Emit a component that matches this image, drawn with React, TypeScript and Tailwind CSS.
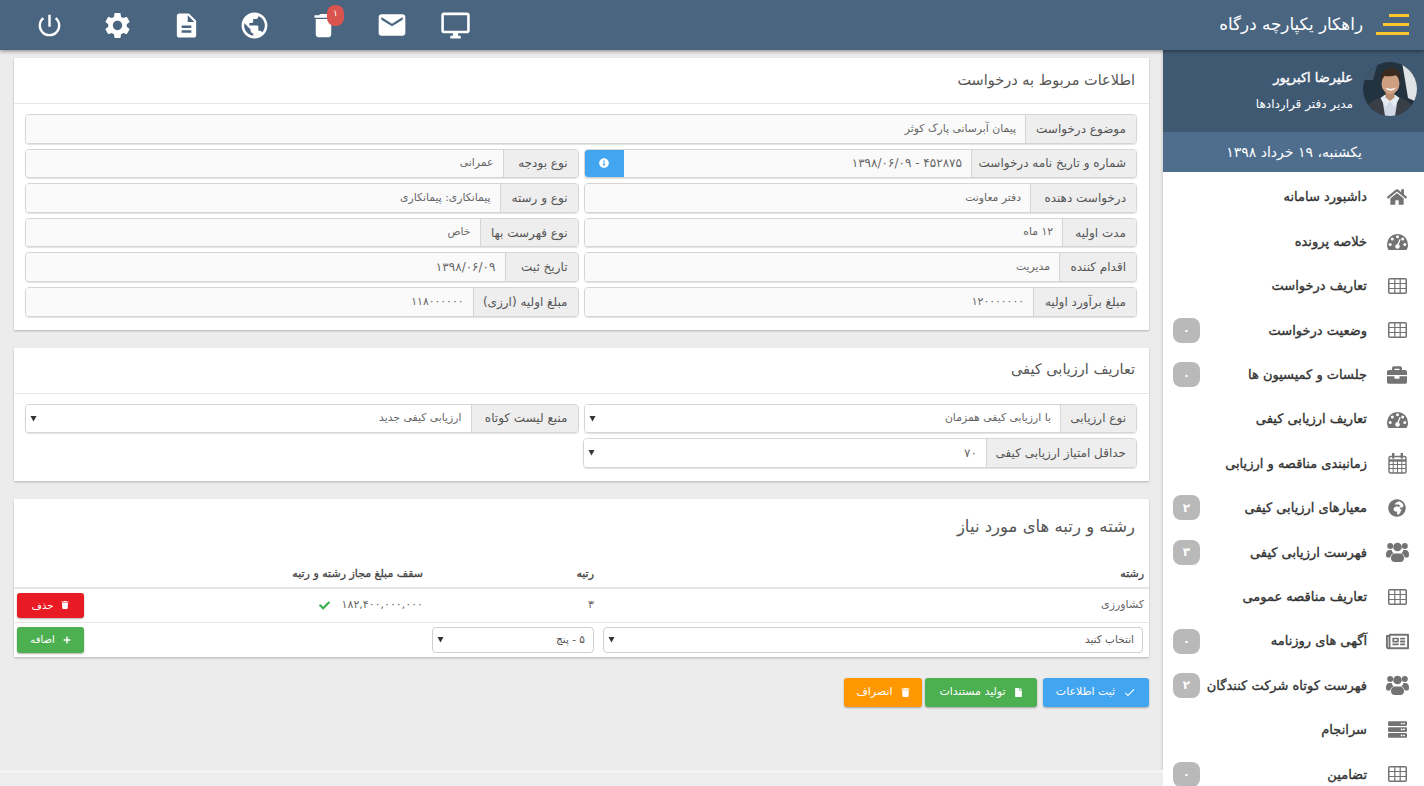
import type { ReactNode } from "react";
import {
  FaBriefcase,
  FaCheck,
  FaFile,
  FaGlobeAfrica,
  FaHome,
  FaInfoCircle,
  FaPlus,
  FaRegNewspaper,
  FaServer,
  FaTrash,
} from "react-icons/fa";
import {
  MdCheck,
  MdDelete,
  MdDescription,
  MdEmail,
  MdOutlineDesktopWindows,
  MdPowerSettingsNew,
  MdPublic,
  MdSettings,
} from "react-icons/md";

function CalendarIcon() {
  return (
    <svg width="19" height="21" viewBox="0 0 19 21" fill="none" stroke="currentColor">
      <rect x="1" y="3.5" width="17" height="16.5" rx="1.5" strokeWidth="1.4" />
      <path d="M1 7.5h17" strokeWidth="2.4" />
      <path d="M1 11.5h17M1 15.5h17M5.2 8v12M9.5 8v12M13.8 8v12" strokeWidth="1" />
      <path d="M5.2 0.5v4M13.8 0.5v4" strokeWidth="2.4" strokeLinecap="round" />
    </svg>
  );
}

function TableIcon() {
  return (
    <svg width="19" height="16" viewBox="0 0 19 16" fill="none" stroke="currentColor">
      <rect x="0.75" y="0.75" width="17.5" height="14.5" rx="1" strokeWidth="1.5" />
      <path d="M1 5.5h17M1 10.5h17M6.8 1v14M12.2 1v14" strokeWidth="1.2" />
    </svg>
  );
}

function GaugeIcon() {
  return (
    <svg width="21" height="17" viewBox="0 0 21 17" fill="currentColor">
      <path d="M0 11.5a10.5 10.5 0 0 1 21 0c0 2-.5 4-1.5 5.5h-18C.5 15.500 0 13.500 0 11.500z" />
      <g fill="#fff">
        <circle cx="3.200" cy="11.500" r="1.500" />
        <circle cx="5.300" cy="6" r="1.500" />
        <circle cx="10.500" cy="3.800" r="1.500" />
        <circle cx="15.700" cy="6" r="1.500" />
        <circle cx="17.800" cy="11.500" r="1.500" />
        <circle cx="10.500" cy="13.500" r="2.300" />
        <path d="M9.600 13l3-7 1 .4-2.500 7.200z" />
      </g>
    </svg>
  );
}

function UsersIcon() {
  return (
    <svg width="23" height="20" viewBox="0 0 23 20" fill="currentColor">
      <circle cx="4.200" cy="4" r="3" />
      <circle cx="18.800" cy="4" r="3" />
      <circle cx="11.500" cy="5" r="4.300" />
      <path d="M0 12.500c0-3 1.500-4.500 3.500-4.500h2.200c.3 1.500 1 2.500 1.800 3.200-1.800.8-3 2.300-3.300 4.300H1.500C.5 15.500 0 14.500 0 12.500z" />
      <path d="M23 12.500c0-3-1.500-4.500-3.500-4.500h-2.200c-.3 1.500-1 2.500-1.800 3.200 1.800.8 3 2.300 3.300 4.300h2.700c1 0 1.500-1 1.500-3z" />
      <path d="M5 16c0-3 2-4.500 3.500-4.500h6C16 11.500 18 13 18 16c0 2.500-1.500 4-3.500 4h-6C6.500 20 5 18.500 5 16z" />
    </svg>
  );
}

const navItems: { label: string; icon: ReactNode; badge?: string }[] = [
  { label: "داشبورد سامانه", icon: <FaHome size={20} /> },
  { label: "خلاصه پرونده", icon: <GaugeIcon /> },
  { label: "تعاریف درخواست", icon: <TableIcon /> },
  { label: "وضعیت درخواست", icon: <TableIcon />, badge: "۰" },
  { label: "جلسات و کمیسیون ها", icon: <FaBriefcase size={20} />, badge: "۰" },
  { label: "تعاریف ارزیابی کیفی", icon: <GaugeIcon /> },
  { label: "زمانبندی مناقصه و ارزیابی", icon: <CalendarIcon /> },
  { label: "معیارهای ارزیابی کیفی", icon: <FaGlobeAfrica size={18} />, badge: "۲" },
  { label: "فهرست ارزیابی کیفی", icon: <UsersIcon />, badge: "۳" },
  { label: "تعاریف مناقصه عمومی", icon: <TableIcon /> },
  { label: "آگهی های روزنامه", icon: <FaRegNewspaper size={23} />, badge: "۰" },
  { label: "فهرست کوتاه شرکت کنندگان", icon: <UsersIcon />, badge: "۲" },
  { label: "سرانجام", icon: <FaServer size={19} /> },
  { label: "تضامین", icon: <TableIcon />, badge: "۰" },
];

function Logo() {
  return (
    <svg width="34" height="22" viewBox="0 0 34 22" fill="#fcc72c">
      <rect x="14" y="0" width="20" height="3" />
      <rect x="8" y="9" width="26" height="3" />
      <rect x="1" y="18" width="33" height="3" />
    </svg>
  );
}

function Avatar() {
  return (
    <svg width="54" height="54" viewBox="0 0 54 54" className="shrink-0 rounded-full">
      <rect width="54" height="54" fill="#22323f" />
      <path d="M39 0h15v40l-9-4z" fill="#dfe3e6" />
      <path d="M0 0h15L10 18H0z" fill="#41586c" />
      <path d="M1 54c0-9 6-15 16-18h20c10 3 15 9 16 18z" fill="#3a3f47" />
      <path d="M19 35h16l-3 19H22z" fill="#cfd8e4" />
      <path d="M17.500 36l5 9 4.500-6 4.500 6 5-9-4-3h-11z" fill="#e6ebf2" />
      <path d="M22.500 28h9v7.500l-4.500 3.500-4.500-3.500z" fill="#b98d70" />
      <ellipse cx="27.500" cy="21.500" rx="9" ry="10.500" fill="#cf9f82" />
      <path d="M18 20c-1.500-9 4-14 10.500-14S39 11 37 20c-.5-3-1.500-5.500-3-7-5 1.500-9 1.500-12.500 1-1.500 1.500-3 3.500-3.500 6z" fill="#3b2a1e" />
      <path d="M22.500 25.500c3 1.800 7 1.800 10 0-1 4-9 4-10 0z" fill="#fff" />
    </svg>
  );
}

function Sidebar() {
  return (
    <aside className="h-full w-[261px] shrink-0 overflow-hidden bg-white shadow-[0_0_4px_rgba(0,0,0,0.2)]">
      <div className="flex h-[82px] items-start gap-[10px] bg-[#3f5973] pt-[12px] pr-[7px] text-white">
        <Avatar />
        <div className="pt-[6px]">
          <div className="text-[13px] leading-5 [-webkit-text-stroke:0.35px_#fff]">علیرضا اکبرپور</div>
          <div className="mt-[6px] text-[12px] leading-5">مدیر دفتر قراردادها</div>
        </div>
      </div>
      <div className="flex h-[40px] items-center bg-[#4f6e8d] pr-[62px] text-[14px] text-white">
        یکشنبه، ۱۹ خرداد ۱۳۹۸
      </div>
      <nav className="pt-[3px]">
        {navItems.map((item) => (
          <div key={item.label} className="flex h-[44.4px] items-center">
            <div className="flex w-[54px] shrink-0 justify-center text-[#737373]">{item.icon}</div>
            <div className="mr-[3px] whitespace-nowrap text-[13px] text-[#333] [-webkit-text-stroke:0.35px_#333]">{item.label}</div>
            {item.badge && (
              <div className="mr-auto ml-[10px] flex h-[25px] w-[27px] items-center justify-center rounded-[8px] bg-[#b9b9b9] text-[12px] font-bold text-white">
                {item.badge}
              </div>
            )}
          </div>
        ))}
      </nav>
    </aside>
  );
}

function Header() {
  const iconBox = "flex w-[68.5px] justify-center";
  return (
    <header className="relative z-10 flex h-[50px] shrink-0 items-center justify-between bg-[#4a6580] shadow-[0_1px_4px_rgba(0,0,0,0.45)]">
      <div className="flex items-center text-white">
        <div className="mr-[15px] ml-[12px]">
          <Logo />
        </div>
        <span className="text-[16.800px]">راهکار یکپارچه درگاه</span>
      </div>
      <div dir="ltr" className="flex items-center pl-[15px] text-white">
        <div className={iconBox}>
          <MdPowerSettingsNew size={29} />
        </div>
        <div className={iconBox}>
          <MdSettings size={31} />
        </div>
        <div className={iconBox}>
          <MdDescription size={29} />
        </div>
        <div className={iconBox}>
          <MdPublic size={31} />
        </div>
        <div className={`${iconBox} relative`}>
          <MdDelete size={31} />
          <span className="absolute left-[38px] top-[-5px] flex h-[21px] w-[17px] items-center justify-center rounded-[8px] bg-[#d9534f] pb-[3px] text-[9px]">
            ۱
          </span>
        </div>
        <div className={iconBox}>
          <MdEmail size={32} />
        </div>
        <div className={`${iconBox} ml-[-5px]`}>
          <MdOutlineDesktopWindows size={31} />
        </div>
      </div>
    </header>
  );
}

function Panel({ title, children }: { title?: string; children: ReactNode }) {
  return (
    <section className="bg-white shadow-[0_1px_2px_rgba(0,0,0,0.25)]">
      {title && (
        <div className="flex h-[46px] items-center border-b-[1.500px] border-[#e6e6e6] px-[14px] text-[14.500px] text-[#555]">
          {title}
        </div>
      )}
      {children}
    </section>
  );
}

function Field({
  label,
  labelWidth,
  value,
  select,
  action,
  numeric,
}: {
  label: string;
  labelWidth: number;
  value?: string;
  select?: boolean;
  action?: boolean;
  numeric?: boolean;
}) {
  return (
    <div className="flex h-[29.600px] min-w-0 flex-1 overflow-hidden rounded-[4px] border border-[#d5d5d5] shadow-[0_1px_1px_rgba(0,0,0,0.12)]">
      <div
        className="flex shrink-0 items-center whitespace-nowrap border-l border-[#d5d5d5] bg-[#eeeeee] pr-[10px] text-[12px] text-[#555]"
        style={{ width: labelWidth }}
      >
        {label}
      </div>
      <div
        className={`flex flex-1 items-center justify-between pr-[9px] pl-[4px] text-[#666] ${
          numeric ? "text-[12px]" : "text-[10.800px]"
        } ${select ? "bg-white" : "bg-[#fafafa]"}`}
      >
        <span>{value}</span>
        {select && <Caret />}
      </div>
      {action && (
        <div className="flex w-[39px] shrink-0 items-center justify-center bg-[#42a5f0] text-white">
          <FaInfoCircle size={10} />
        </div>
      )}
    </div>
  );
}

function Caret() {
  return (
    <svg width="7" height="7" viewBox="0 0 7 7" fill="#333" className="shrink-0">
      <path d="M0.500 1h6L3.500 6.500z" />
    </svg>
  );
}

function SelectBox({ value }: { value: string }) {
  return (
    <div className="flex h-[26px] items-center justify-between rounded-[4px] border border-[#cfcfcf] bg-white pr-[8px] pl-[4px] text-[10.500px] text-[#555]">
      <span>{value}</span>
      <Caret />
    </div>
  );
}

function ActionButton({ color, icon, children, width }: { color: string; icon: ReactNode; children: ReactNode; width: string }) {
  return (
    <button className={`flex items-center justify-center gap-[8px] rounded-[3px] text-white shadow-[0_1px_2px_rgba(0,0,0,0.3)] ${color} ${width}`}>
      {icon}
      <span>{children}</span>
    </button>
  );
}

export default function App() {
  const headCell = "flex h-[23px] items-start border-b-2 border-[#e6e6e6] font-normal text-[#444] [-webkit-text-stroke:0.3px_#444]";
  const rowCell = "flex h-[34px] items-center border-b border-[#e6e6e6] text-[#666]";
  return (
    <div dir="rtl" className="flex h-screen w-full flex-col overflow-hidden bg-[#ececec] font-['DejaVu_Sans',sans-serif]">
      <Header />
      <div className="flex min-h-0 flex-1">
        <Sidebar />
        <main className="flex min-w-0 flex-1 flex-col">
          <div className="flex flex-col gap-[18px] px-[14px] pt-[8px]">
            <Panel title="اطلاعات مربوط به درخواست">
              <div className="flex flex-col gap-[5px] pt-[10px] pr-[12px] pl-[11px] pb-[13px]">
                <div className="flex">
                  <Field label="موضوع درخواست" labelWidth={111} value="پیمان آبرسانی پارک کوثر" />
                </div>
                <div className="flex gap-[5px]">
                  <Field label="شماره و تاریخ نامه درخواست" labelWidth={165} value="۴۵۲۸۷۵ - ۱۳۹۸/۰۶/۰۹" action numeric />
                  <Field label="نوع بودجه" labelWidth={75} value="عمرانی" />
                </div>
                <div className="flex gap-[5px]">
                  <Field label="درخواست دهنده" labelWidth={106} value="دفتر معاونت" />
                  <Field label="نوع و رسته" labelWidth={78} value="پیمانکاری: پیمانکاری" />
                </div>
                <div className="flex gap-[5px]">
                  <Field label="مدت اولیه" labelWidth={74} value="۱۲ ماه" />
                  <Field label="نوع فهرست بها" labelWidth={98} value="خاص" />
                </div>
                <div className="flex gap-[5px]">
                  <Field label="اقدام کننده" labelWidth={77} value="مدیریت" />
                  <Field label="تاریخ ثبت" labelWidth={73} value="۱۳۹۸/۰۶/۰۹" numeric />
                </div>
                <div className="flex gap-[5px]">
                  <Field label="مبلغ برآورد اولیه" labelWidth={103} value="۱۲۰۰۰۰۰۰۰" />
                  <Field label="مبلغ اولیه (ارزی)" labelWidth={105} value="۱۱۸۰۰۰۰۰۰" />
                </div>
              </div>
            </Panel>

            <Panel title="تعاریف ارزیابی کیفی">
              <div className="flex flex-col gap-[5px] pt-[10px] pr-[12px] pl-[11px] pb-[13px]">
                <div className="flex gap-[5px]">
                  <Field label="نوع ارزیابی" labelWidth={76} value="با ارزیابی کیفی همزمان" select />
                  <Field label="منبع لیست کوتاه" labelWidth={107} value="ارزیابی کیفی جدید" select />
                </div>
                <div className="flex gap-[5px]">
                  <Field label="حداقل امتیاز ارزیابی کیفی" labelWidth={150} value="۷۰" select numeric />
                  <div className="min-w-0 flex-1" />
                </div>
              </div>
            </Panel>

            <Panel>
              <div className="px-[14px] pt-[17px] text-[16.500px] leading-[22px] text-[#555]">رشته و رتبه های مورد نیاز</div>
              <div className="mt-[28px] grid grid-cols-[551px_170px_340px_74px] text-[11px]">
                <div className={`${headCell} pr-[5px]`}>رشته</div>
                <div className={`${headCell} pr-[4px]`}>رتبه</div>
                <div className={`${headCell} pr-[5px]`}>سقف مبلغ مجاز رشته و رتبه</div>
                <div className="h-[23px] border-b-2 border-[#e6e6e6]" />

                <div className={`${rowCell} pr-[5px]`}>کشاورزی</div>
                <div className={`${rowCell} pr-[4px]`}>۳</div>
                <div className={`${rowCell} gap-[12px] pr-[5px]`}>
                  <span>۱۸۲,۴۰۰,۰۰۰,۰۰۰</span>
                  <FaCheck size={11} className="text-[#3bae4e]" />
                </div>
                <div className={`${rowCell} pr-[4px] pl-[3px]`}>
                  <ActionButton color="bg-[#e81a24]" icon={<FaTrash size={8} />} width="h-[25px] w-[67px] text-[10px]">
                    حذف
                  </ActionButton>
                </div>

                <div className="flex h-[34px] items-center pr-[6px] pl-[5px]">
                  <div className="w-full">
                    <SelectBox value="انتخاب کنید" />
                  </div>
                </div>
                <div className="flex h-[34px] items-center px-[4px]">
                  <div className="w-full">
                    <SelectBox value="۵ - پنج" />
                  </div>
                </div>
                <div className="h-[34px]" />
                <div className="flex h-[34px] items-center pr-[4px] pl-[3px]">
                  <ActionButton color="bg-[#4caf50]" icon={<FaPlus size={8} />} width="h-[26px] w-[67px] text-[10px]">
                    اضافه
                  </ActionButton>
                </div>
              </div>
            </Panel>
          </div>

          <div className="mt-[21px] flex gap-[3px] px-[14px]">
            <ActionButton color="bg-[#42a5f0] ml-[3px]" icon={<MdCheck size={13} />} width="h-[29px] w-[106px] text-[11px]">
              ثبت اطلاعات
            </ActionButton>
            <ActionButton color="bg-[#4caf50]" icon={<FaFile size={9} />} width="h-[29px] w-[112px] text-[11px]">
              تولید مستندات
            </ActionButton>
            <ActionButton color="bg-[#ff9800]" icon={<FaTrash size={9} />} width="h-[29px] w-[78px] text-[11px]">
              انصراف
            </ActionButton>
          </div>

          <div className="mt-auto h-[16px] border-t-[3px] border-[#f4f4f4] bg-[#ededed]" />
        </main>
      </div>
    </div>
  );
}
